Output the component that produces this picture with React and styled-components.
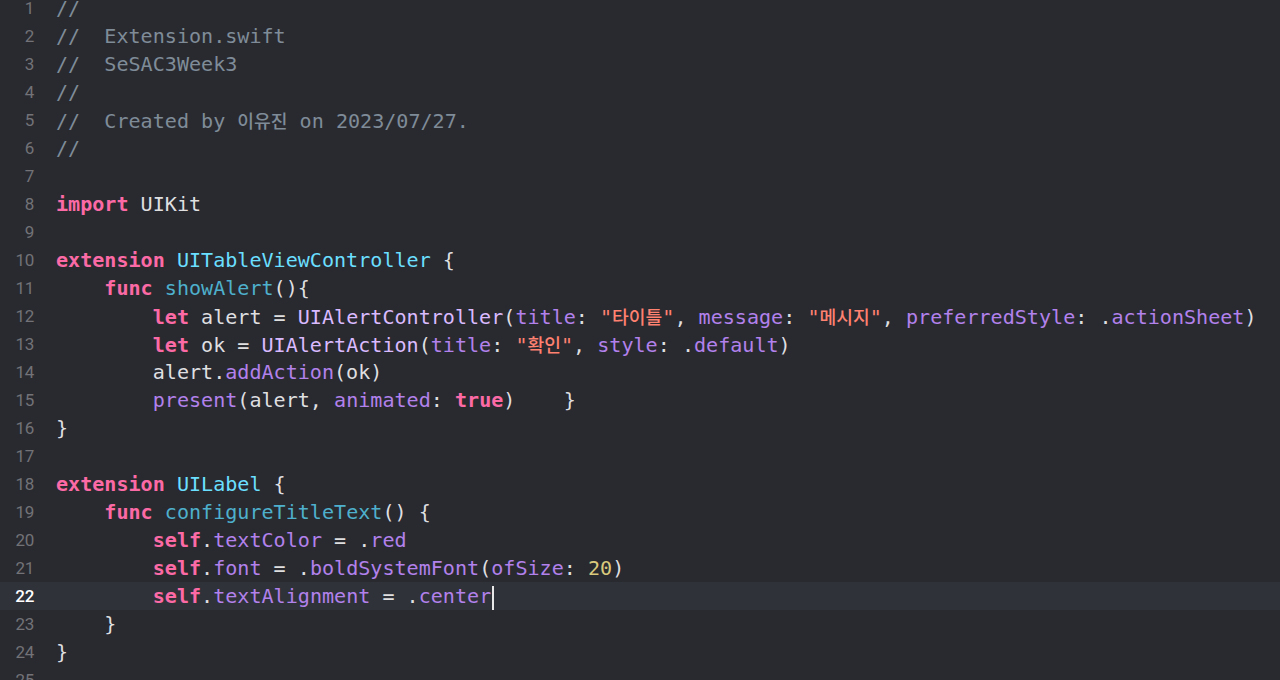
import React from "react";
import styled, { createGlobalStyle, css } from "styled-components";

const Global = createGlobalStyle`
  html, body { margin: 0; padding: 0; background: #292a30; }
  #root { height: 680px; }
`;

const COLORS = {
  p: "#dfdfe0",
  k: "#fc6aa6",
  c: "#7f8c98",
  t: "#6bdfff",
  d: "#4eb0cc",
  cl: "#dabaff",
  f: "#b281eb",
  s: "#ff8170",
  n: "#d9c97c",
};

const Editor = styled.main`
  width: 1280px;
  height: 680px;
  background: #292a30;
  overflow: hidden;
`;

const Lines = styled.div`
  display: flex;
  flex-direction: column;
  margin-top: -6px;
`;

const Row = styled.div`
  display: flex;
  align-items: center;
  height: 28px;
  background: ${(p) => (p.$current ? "#2f3239" : "transparent")};
`;

const LineNo = styled.span`
  flex: 0 0 34px;
  text-align: right;
  margin-right: 22px;
  font-family: Roboto, "Liberation Sans", sans-serif;
  font-size: 17px;
  letter-spacing: -0.3px;
  color: ${(p) => (p.$current ? "#ffffff" : "#727277")};
  font-weight: ${(p) => (p.$current ? 500 : 400)};
`;

const Code = styled.code`
  flex: 1;
  white-space: pre;
  font-family: "DejaVu Sans Mono", "Liberation Mono", monospace;
  font-size: 20.08px;
  line-height: 28px;
  color: ${COLORS.p};
`;

const Tok = styled.span`
  color: ${(p) => COLORS[p.$kind] || COLORS.p};
  ${(p) =>
    p.$kind === "k" &&
    css`
      font-weight: bold;
    `}
`;

const Hangul = styled.span`
  font-family: "Noto Sans CJK KR", sans-serif;
  font-size: 18.2px;
  font-weight: 500;
`;

const Caret = styled.span`
  display: inline-block;
  width: 1.5px;
  height: 24px;
  margin-left: 1px;
  vertical-align: middle;
  background: #e8e8e8;
`;

const code = [
  [["c", "//"]],
  [["c", "//  Extension.swift"]],
  [["c", "//  SeSAC3Week3"]],
  [["c", "//"]],
  [["c", "//  Created by 이유진 on 2023/07/27."]],
  [["c", "//"]],
  [],
  [["k", "import"], ["p", " UIKit"]],
  [],
  [["k", "extension"], ["p", " "], ["t", "UITableViewController"], ["p", " {"]],
  [["p", "    "], ["k", "func"], ["p", " "], ["d", "showAlert"], ["p", "(){"]],
  [
    ["p", "        "], ["k", "let"], ["p", " alert = "], ["cl", "UIAlertController"], ["p", "("],
    ["f", "title"], ["p", ": "], ["s", "\"타이틀\""], ["p", ", "], ["f", "message"], ["p", ": "],
    ["s", "\"메시지\""], ["p", ", "], ["f", "preferredStyle"], ["p", ": ."], ["f", "actionSheet"], ["p", ")"],
  ],
  [
    ["p", "        "], ["k", "let"], ["p", " ok = "], ["cl", "UIAlertAction"], ["p", "("],
    ["f", "title"], ["p", ": "], ["s", "\"확인\""], ["p", ", "], ["f", "style"], ["p", ": ."],
    ["f", "default"], ["p", ")"],
  ],
  [["p", "        alert."], ["f", "addAction"], ["p", "(ok)"]],
  [["p", "        "], ["f", "present"], ["p", "(alert, "], ["f", "animated"], ["p", ": "], ["k", "true"], ["p", ")    }"]],
  [["p", "}"]],
  [],
  [["k", "extension"], ["p", " "], ["t", "UILabel"], ["p", " {"]],
  [["p", "    "], ["k", "func"], ["p", " "], ["d", "configureTitleText"], ["p", "() {"]],
  [["p", "        "], ["k", "self"], ["p", "."], ["f", "textColor"], ["p", " = ."], ["f", "red"]],
  [
    ["p", "        "], ["k", "self"], ["p", "."], ["f", "font"], ["p", " = ."], ["f", "boldSystemFont"],
    ["p", "("], ["f", "ofSize"], ["p", ": "], ["n", "20"], ["p", ")"],
  ],
  [["p", "        "], ["k", "self"], ["p", "."], ["f", "textAlignment"], ["p", " = ."], ["f", "center"]],
  [["p", "    }"]],
  [["p", "}"]],
  [],
  [],
];

const CURRENT = 22;

function renderText(text) {
  const parts = text.split(/([\uAC00-\uD7A3]+)/);
  return parts.map((part, i) =>
    /[\uAC00-\uD7A3]/.test(part) ? <Hangul key={i}>{part}</Hangul> : part
  );
}

export default function App() {
  return (
    <>
      <Global />
      <Editor>
        <Lines>
          {code.map((tokens, i) => {
            const n = i + 1;
            const current = n === CURRENT;
            return (
              <Row key={n} $current={current}>
                <LineNo $current={current}>{n}</LineNo>
                <Code>
                  {tokens.map(([kind, text], j) => (
                    <Tok key={j} $kind={kind}>
                      {renderText(text)}
                    </Tok>
                  ))}
                  {current && <Caret />}
                  {tokens.length === 0 && " "}
                </Code>
              </Row>
            );
          })}
        </Lines>
      </Editor>
    </>
  );
}
